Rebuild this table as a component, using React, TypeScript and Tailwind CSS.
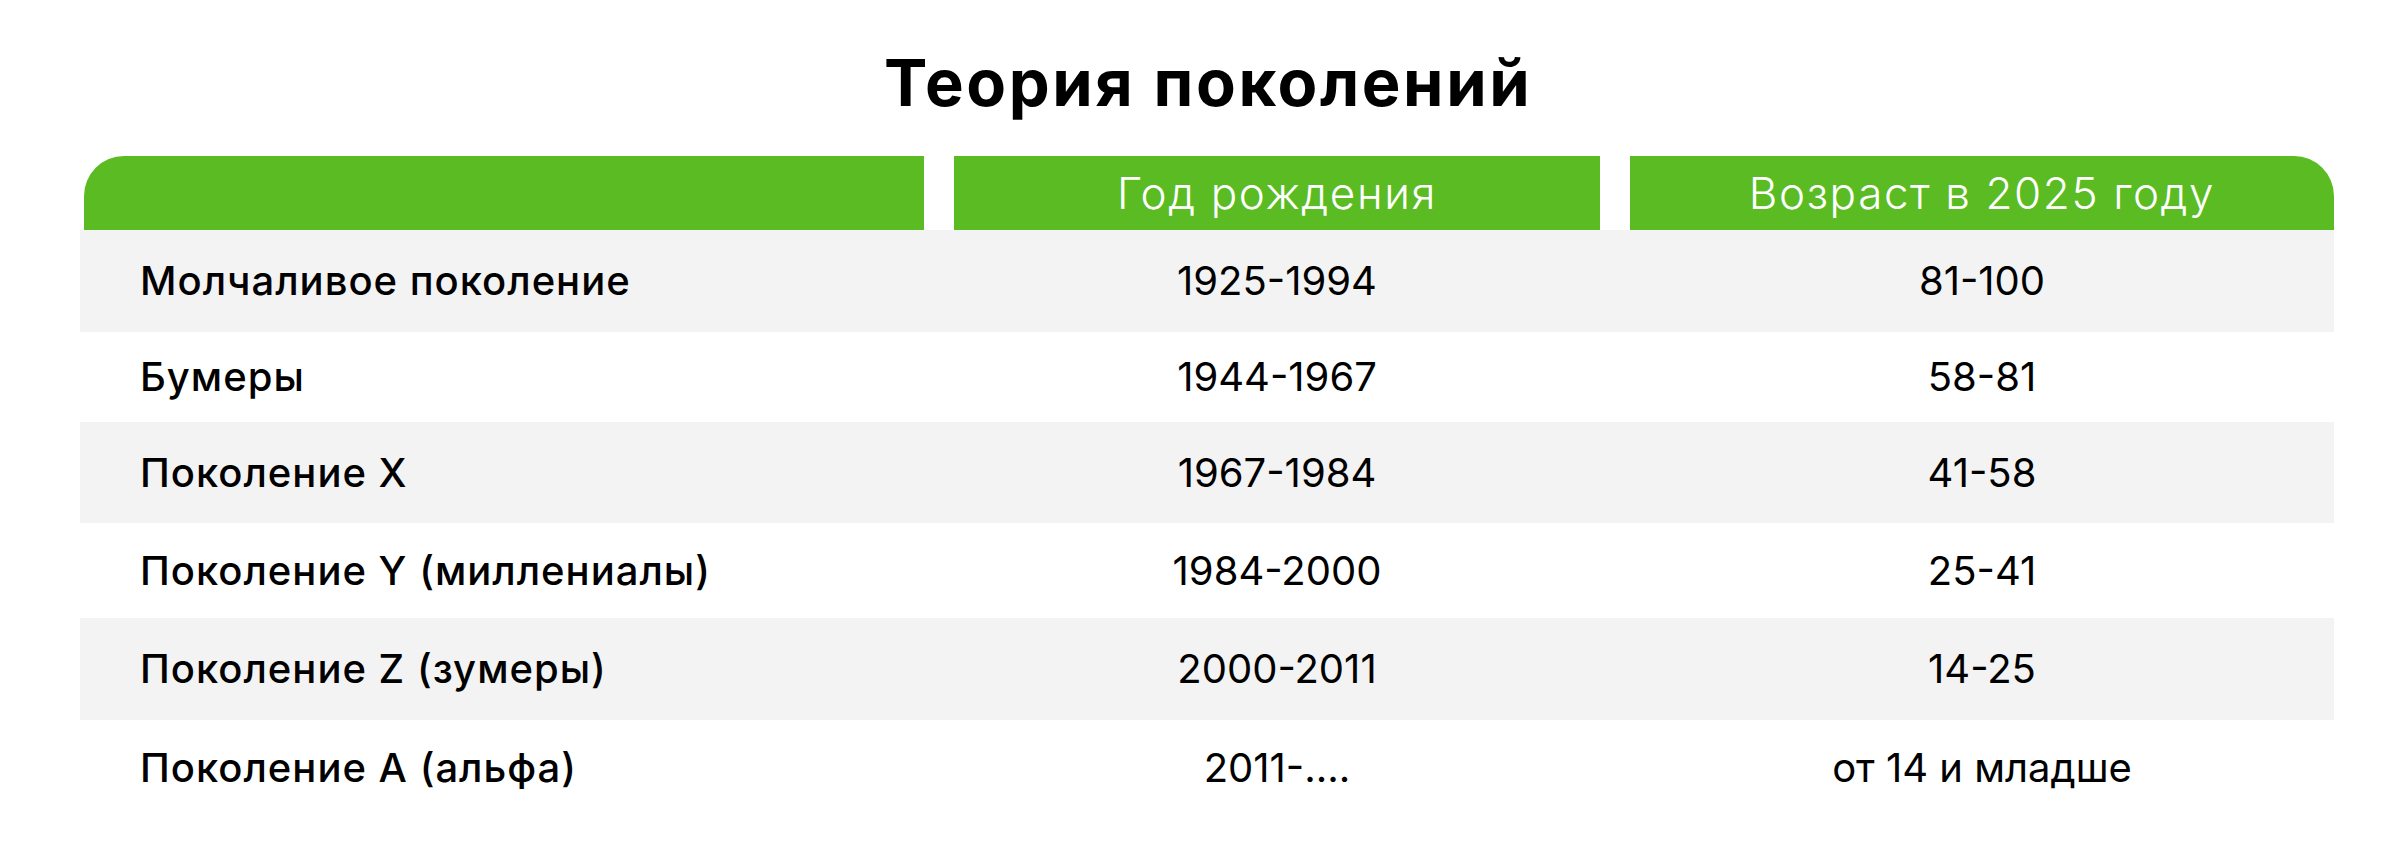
const rows = [
  { name: "Молчаливое поколение", born: "1925-1994", age: "81-100", h: "h-[102px]", gray: true },
  { name: "Бумеры", born: "1944-1967", age: "58-81", h: "h-[90px]", gray: false },
  { name: "Поколение X", born: "1967-1984", age: "41-58", h: "h-[101px]", gray: true },
  { name: "Поколение Y (миллениалы)", born: "1984-2000", age: "25-41", h: "h-[95px]", gray: false },
  { name: "Поколение Z (зумеры)", born: "2000-2011", age: "14-25", h: "h-[102px]", gray: true },
  { name: "Поколение A (альфа)", born: "2011-....", age: "от 14 и младше", h: "h-[96px]", gray: false },
]

export default function App() {
  return (
    <div className="min-h-[860px] bg-white pt-[50px] font-['Inter','Noto_Sans',sans-serif] text-black">
      <h1 className="ml-[884px] text-[65px] leading-none font-bold tracking-[2.6px]">Теория поколений</h1>

      <div className="mt-[41px] ml-[80px] w-[2254px]">
        {/* header */}
        <div className="grid h-[74px] grid-cols-[844px_646px_704px] gap-x-[30px] text-[44px] leading-none font-light tracking-[1.6px] text-white">
          <div className="ml-[4px] rounded-tl-[40px] bg-[#5abc22]" />
          <div className="flex items-center justify-center bg-[#5abc22]">Год рождения</div>
          <div className="flex items-center justify-center rounded-tr-[40px] bg-[#5abc22]">Возраст в 2025 году</div>
        </div>

        {rows.map((r) => (
          <div
            key={r.name}
            className={`grid grid-cols-[844px_646px_704px] items-center gap-x-[30px] text-[40px] leading-none ${r.h} ${r.gray ? "bg-[#f3f3f3]" : "bg-white"}`}
          >
            <div className="pl-[60px] font-medium tracking-[1px]">{r.name}</div>
            <div className="text-center font-normal">{r.born}</div>
            <div className="text-center font-normal">{r.age}</div>
          </div>
        ))}
      </div>
    </div>
  )
}
